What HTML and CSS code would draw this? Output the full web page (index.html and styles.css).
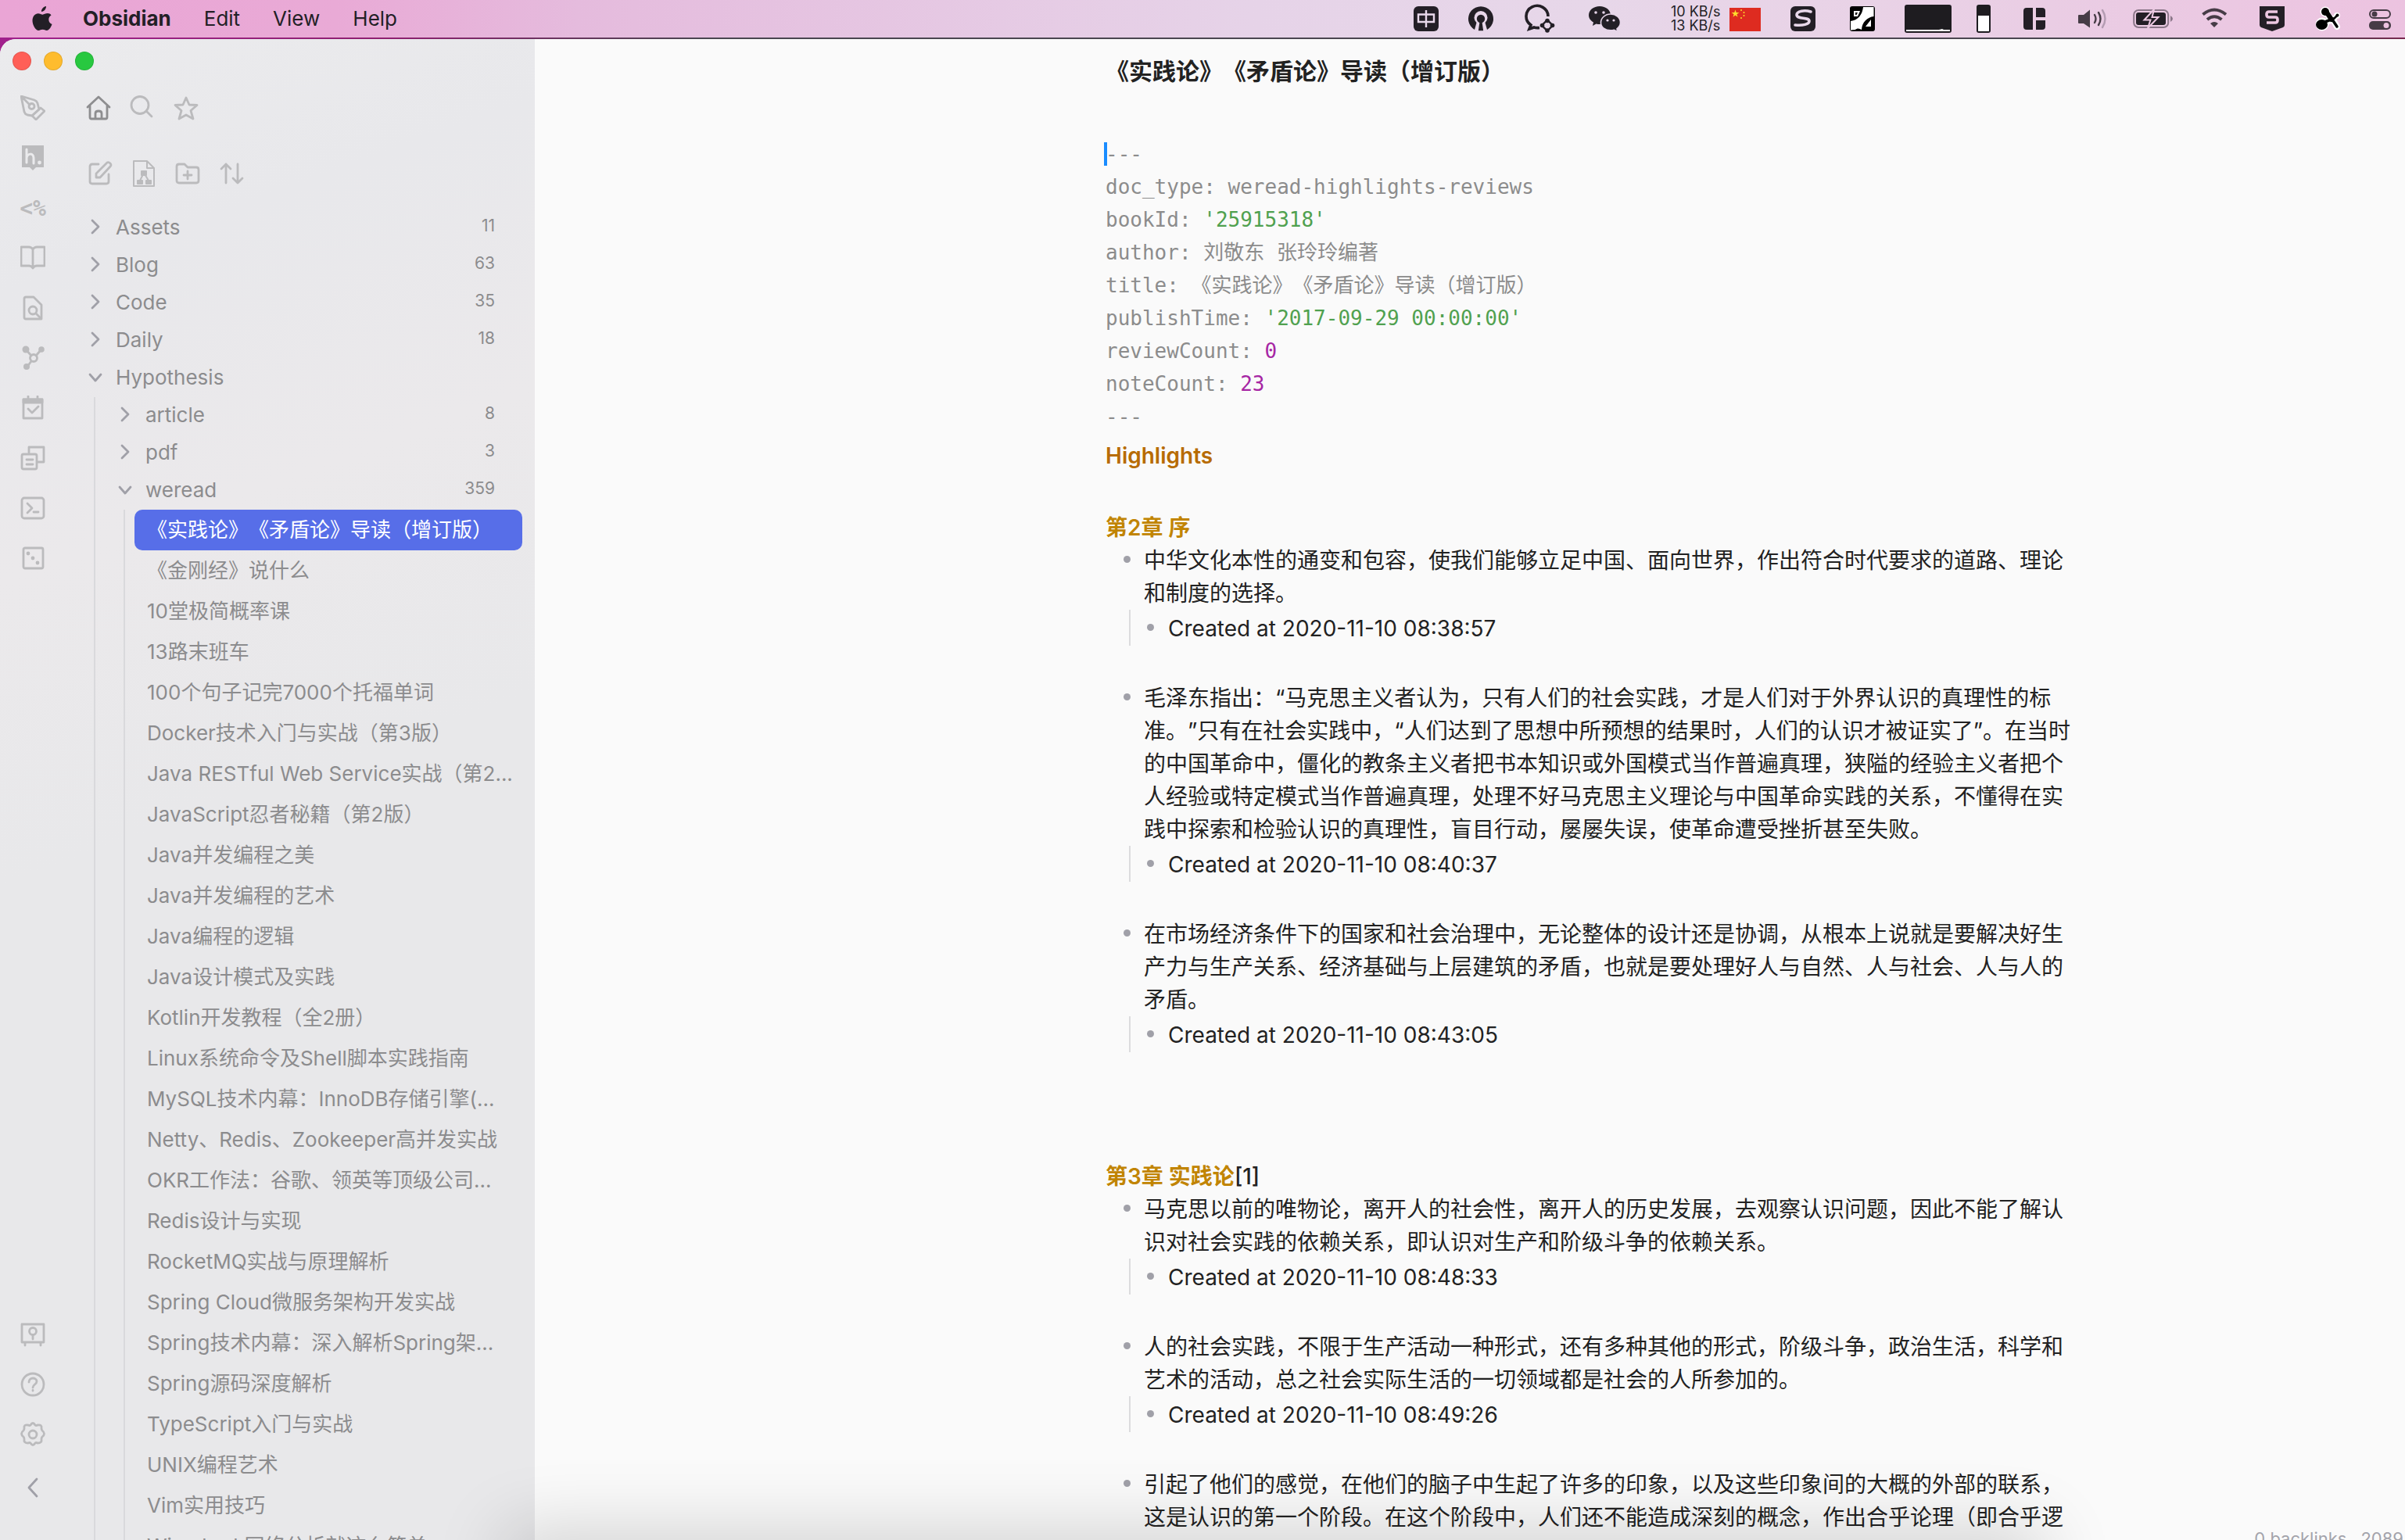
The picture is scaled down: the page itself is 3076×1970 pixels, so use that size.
FILE: index.html
```html
<!DOCTYPE html>
<html lang="zh-CN">
<head>
<meta charset="utf-8">
<title>Obsidian</title>
<link rel="stylesheet" href="styles.css">
</head>
<body>
<header class="menubar">
  <nav class="menus" aria-label="Application menu">
    <svg class="apple" width="28" height="36" viewBox="0 0 28 36" fill="currentColor"><path d="M19 2c.3 3-2.600 7-6 7-.4-3 2.700-6.700 6-7zM25.500 13.500c-2 1.200-3.200 3-3.200 5.500 0 3 1.700 5 4.200 6-1 3.200-3.700 8-6.800 8-2 0-2.800-1.200-5.200-1.200s-3.200 1.200-5.200 1.200C5.500 33 1.500 26 1.500 20.500c0-5.700 3.400-9.300 7.300-9.300 2.400 0 4.200 1.500 5.800 1.500 1.500 0 3.500-1.600 6.400-1.600 1.600 0 3.500.8 4.500 2.400z"/></svg>
    <button class="menu menu-app">Obsidian</button>
    <button class="menu">Edit</button>
    <button class="menu">View</button>
    <button class="menu">Help</button>
  </nav>
  <div class="tray">
    <svg width="38" height="48" viewBox="0 0 38 48"><rect y="8" width="32" height="32" rx="6" fill="#231f26"/><path d="M6 18.500h20v9.500H6zM16 13v22" fill="none" stroke="#e8d8ea" stroke-width="2.400"/></svg>
    <svg width="40" height="48" viewBox="0 0 40 48"><path d="M8 38A16 16 0 1 1 24 38L21.500 29A8.500 8.500 0 1 0 10.500 29z" fill="#231f26"/><path d="M14 26h4l2 14h-8z" fill="#231f26" stroke="#e7d7e9" stroke-width="1.500"/><circle cx="16" cy="24" r="5.200" fill="#231f26"/></svg>
    <svg width="50" height="48" viewBox="0 0 50 48"><path d="M30 21A14 13.500 0 1 0 8 32l-2 5 6-2q3 1 7 .5" fill="none" stroke="#231f26" stroke-width="3.600"/><path d="M29 25.500l7 7-7 7-7-7z" fill="none" stroke="#231f26" stroke-width="2.400"/><g fill="#231f26"><circle cx="29" cy="26.500" r="2.800"/><circle cx="35.500" cy="32.500" r="2.800"/><circle cx="29" cy="39" r="2.800"/><circle cx="22.500" cy="32.500" r="2.800"/></g></svg>
    <svg width="73" height="48" viewBox="0 0 73 48"><path d="M14 8c8 0 14 5 14 11.500S22 31 14 31c-1.500 0-3-.2-4.500-.6L5 33l1-4.500C2.500 26.500 0 23.500 0 19.500 0 13 6 8 14 8z" fill="#231f26"/><path d="M28 18c7 0 12.500 4.800 12.500 10.800 0 3.400-1.800 6-4.500 8l.8 3.700-4.300-2.200c-1.500.4-3 .6-4.500.6-7 0-12.500-4.200-12.500-10S21 18 28 18z" fill="#231f26" stroke="#e6d5e8" stroke-width="1.600"/><g fill="#e6d5e8"><circle cx="9" cy="16" r="1.800"/><circle cx="19" cy="16" r="1.800"/><circle cx="24" cy="26" r="1.600"/><circle cx="32" cy="26" r="1.600"/></g></svg>
    <div class="network">
      <div class="speeds"><span>10 KB/s</span><span>13 KB/s</span></div>
      <svg width="40" height="48" viewBox="0 0 40 48"><rect y="10" width="40" height="30" fill="#de2b20"/><path d="M7.500 12.500l1.200 3.500h3.700l-3 2.200 1.100 3.600-3-2.200-3 2.200 1.100-3.600-3-2.200h3.700z" fill="#fddc2c"/><g fill="#fddc2c"><circle cx="15" cy="13" r="1"/><circle cx="18.500" cy="16" r="1"/><circle cx="18.500" cy="20" r="1"/><circle cx="15" cy="23" r="1"/></g></svg>
    </div>
    <svg width="43" height="48" viewBox="0 0 43 48"><rect y="8" width="32" height="32" rx="6" fill="#231f26"/><path d="M26 15c-8-2.500-18-1-18 4 0 6 16 2.500 16 8 0 4-8 6-18 5" fill="none" stroke="#e8d8ea" stroke-width="3.600" stroke-linecap="round"/></svg>
    <svg width="39" height="48" viewBox="0 0 39 48"><rect x="1" y="8" width="32" height="32" rx="3" fill="#000"/><path d="M18 9h13.500v12c-8 1-15 7-15.500 17-3-2-6-2-8 0L2 38.500V27c9-1 15-8 16-18z" fill="#fff"/><path d="M6 14h8l-3 7H6zM28 25v9h-7z" fill="#fff"/><path d="M8 16h3l-1.500 3H8z" fill="#000"/></svg>
    <svg width="60" height="48" viewBox="0 0 60 48"><rect y="6" width="60" height="36" rx="3" fill="#1e1c20"/><path d="M2 40v-2h42l4-1 2 1h8v2z" fill="#fff"/></svg>
    <svg width="28" height="48" viewBox="0 0 28 48"><rect y="6" width="18" height="36" rx="3" fill="#1e1c20"/><rect x="2" y="20" width="14" height="20" fill="#fff"/></svg>
    <svg width="38" height="48" viewBox="0 0 38 48" fill="#231f26"><path d="M4 10h8v28H4a4 4 0 0 1-4-4V14a4 4 0 0 1 4-4zM16 10h8a4 4 0 0 1 4 4v8H16zM16 26h12v8a4 4 0 0 1-4 4h-8z"/></svg>
    <svg width="38" height="48" viewBox="0 0 38 48"><path d="M1 19h6l8-6.500v23L7 30H1a1 1 0 0 1-1-1v-9a1 1 0 0 1 1-1z" fill="#463c46"/><g fill="none" stroke-width="2.400" stroke-linecap="round"><path d="M21 19q3 5 0 10" stroke="#463c46"/><path d="M26 16q5 8 0 16" stroke="#463c46"/><path d="M31 13q7 11 0 22" stroke="#b49cb2"/></g></svg>
    <svg width="56" height="48" viewBox="0 0 56 48"><rect x="1.200" y="13" width="44" height="22" rx="6" fill="none" stroke="#8a7688" stroke-width="2"/><rect x="4" y="16" width="38" height="16" rx="3" fill="#231f26"/><path d="M48 20q6 4 0 8z" fill="#8a7688"/><path d="M27 12L14.500 25.500h8L19 36l13.500-14h-8z" fill="#231f26" stroke="#ecc9e2" stroke-width="2"/></svg>
    <svg width="42" height="48" viewBox="0 0 42 48"><g fill="none" stroke="#463c46" stroke-width="4"><path d="M1.500 18.500q14.500-12 29.500 0"/><path d="M7 25q9-7.500 18.500 0"/></g><path d="M11 30q5-4 10 0l-5 5z" fill="#463c46"/></svg>
    <svg width="39" height="48" viewBox="0 0 39 48"><path d="M0 8h32v24q0 2-2 3l-14 5-14-5q-2-1-2-3z" fill="#231f26"/><path d="M23 15H12q-3 0-3 3v1q0 3 3 3h8q3 0 3 3v1q0 3-3 3H9" fill="none" stroke="#ecc7e1" stroke-width="3.600"/></svg>
    <svg width="37" height="48" viewBox="0 0 37 48"><g stroke="#fff" stroke-width="4" fill="#fff"><circle cx="13" cy="15" r="4.500"/><circle cx="9" cy="31" r="6.500"/><path d="M13 14l8 12M10 30l14-6M22 24l6 10" stroke-width="8" stroke-linecap="round"/><circle cx="28" cy="20" r="2"/></g><g fill="#000" stroke="#000" stroke-linecap="round"><ellipse cx="13" cy="15" rx="5" ry="5" stroke="none"/><ellipse cx="8.500" cy="31.500" rx="7.500" ry="6.500" stroke="none"/><path d="M15 16l6 9" stroke-width="6"/><path d="M10 29l13-5M22 25l6 9" stroke-width="3.500"/><path d="M24 24l4-4" stroke-width="2.500"/><circle cx="28.500" cy="19.500" r="2" stroke="none"/></g></svg>
    <svg width="28" height="48" viewBox="0 0 28 48"><rect x="1" y="13" width="26" height="10" rx="5" fill="none" stroke="#463c46" stroke-width="2"/><circle cx="7" cy="18" r="3.500" fill="#463c46"/><rect y="27" width="28" height="11" rx="5" fill="#463c46"/><circle cx="22" cy="32.500" r="3.500" fill="#ecc3e0"/></svg>
  </div>
</header>

<div class="window">
  <aside class="side">
    <div class="lights">
      <button class="light red" aria-label="Close"></button>
      <button class="light yellow" aria-label="Minimise"></button>
      <button class="light green" aria-label="Zoom"></button>
    </div>
    <div class="side-body">
      <nav class="ribbon" aria-label="Ribbon">
        <button aria-label="Pen"><svg class="icon" viewBox="0 0 32 32"><path d="M1 1l17 5q3 1 4 4l2 8-9 8-6-1q-3-1-4-4zM1 1l11 11"/><circle cx="14.500" cy="14" r="3.500"/><path d="M26 16l5 4-11 11-5-5z"/></svg></button>
        <button aria-label="Hypothesis"><svg class="icon" viewBox="0 0 32 32"><path d="M2 0h28v28H20l-4 4-4-4H2z" fill="currentColor" stroke="none"/><path d="M8 5v17M8 16c1-6 9-7 9 0v7" stroke="#eaeaec" stroke-width="3"/><circle cx="24.500" cy="22" r="2.400" fill="#eaeaec" stroke="none"/></svg></button>
        <button class="tpl" aria-label="Templates">&lt;%</button>
        <button aria-label="Reader"><svg class="icon" viewBox="0 0 32 32"><path d="M16 5q-2-3-5-3H1v24h10q3 0 5 3 2-3 5-3h10V2H21q-3 0-5 3zM16 5v24"/></svg></button>
        <button aria-label="Quick search"><svg class="icon" viewBox="0 0 32 32"><path d="M7 2h10l10 10v18H7q-2 0-2-2V4q0-2 2-2z"/><circle cx="16" cy="19" r="5"/><path d="M20 23l6 6"/></svg></button>
        <button aria-label="Graph view"><svg class="icon" viewBox="0 0 32 32"><circle cx="17" cy="16" r="4.500"/><path d="M7 5l7 8M20 13l6-7M14 20l-5 7"/><g fill="currentColor" stroke="none"><circle cx="7" cy="5" r="4.500"/><circle cx="27" cy="5" r="3.800"/><circle cx="8" cy="27" r="4"/></g></svg></button>
        <button aria-label="Daily note"><svg class="icon" viewBox="0 0 32 32"><path d="M4 5h24v24H4zM10 1v4M22 1v4M10 17l5 5 8-8"/><path d="M4 5h24v4H4z" fill="currentColor"/></svg></button>
        <button aria-label="Cards"><svg class="icon" viewBox="0 0 32 32"><path d="M11 9V2h19v19h-8"/><rect x="2" y="11" width="19" height="19" rx="2"/><path d="M8 18h8M8 24h8"/></svg></button>
        <button aria-label="Command palette"><svg class="icon" viewBox="0 0 32 32"><rect x="2" y="3" width="28" height="26" rx="3"/><path d="M9 10l6 6-6 6M17 21h6"/></svg></button>
        <button aria-label="Random note"><svg class="icon" viewBox="0 0 32 32"><rect x="4" y="3" width="25" height="26" rx="2"/><g fill="currentColor" stroke="none"><circle cx="10" cy="10" r="2.400"/><circle cx="16" cy="16" r="2.400"/><circle cx="22" cy="22" r="2.400"/></g></svg></button>
        <button class="push" aria-label="Open vault"><svg class="icon" viewBox="0 0 32 32"><path d="M2 3h28v23H2zM6 26v4M26 26v4M16 17v5"/><circle cx="16" cy="12" r="4.500"/></svg></button>
        <button aria-label="Help"><svg class="icon" viewBox="0 0 32 32"><circle cx="16" cy="16" r="14"/><path d="M11 13c0-7 10-6 10-1 0 4-5 4-5 8M16 23.500v.5"/></svg></button>
        <button aria-label="Settings"><svg class="icon" viewBox="0 0 32 32"><path d="M13 4q3-5 6 0 1 1 3 0 6-1 5 4 0 2 1 3 5 4 0 8-1 1-1 3 1 5-5 5-2-1-3 0-3 5-6 0-1-1-3 0-6 0-5-5 0-2-1-3-5-4 0-8 1-1 1-3-1-5 5-4 2 1 3 0z"/><circle cx="16" cy="16" r="5"/></svg></button>
        <button class="collapse" aria-label="Collapse sidebar"><svg class="icon" viewBox="0 0 32 32"><path d="M21 5L11 16l10 11"/></svg></button>
      </nav>
      <section class="explorer">
        <div class="tabs">
          <button class="active" aria-label="Files"><svg class="icon" viewBox="0 0 32 32"><path d="M2 15L16 2l14 13M5 13v15q0 2 2 2h18q2 0 2-2V13M12 30v-7q0-3 4-3t4 3v7"/></svg></button>
          <button aria-label="Search"><svg class="icon" viewBox="0 0 32 32"><circle cx="13" cy="12.500" r="11"/><path d="M21 20l7 7"/></svg></button>
          <button aria-label="Starred"><svg class="icon" viewBox="0 0 32 32"><path d="M16 3l4 9 10 .5-8 7L25 30l-9-5-9 5 3-10.500-8-7L12 12z"/></svg></button>
        </div>
        <div class="actions">
          <button aria-label="New note"><svg class="icon" viewBox="0 0 32 32"><path d="M14 4H6Q3 4 3 7v19q0 3 3 3h18q3 0 3-3V17M11 21v-5L25 2q2-1 4 1t0 4L16 21z"/></svg></button>
          <button aria-label="New diagram"><svg class="icon tall" viewBox="0 0 32 36"><path d="M3 2h17l9 9v23H3zM20 2v9h9M16 17l-5 10M16 17l6 10" stroke-width="2"/><g fill="currentColor" stroke="none"><rect x="12" y="14" width="8" height="7" rx="1"/><rect x="7" y="26" width="8" height="6" rx="1"/><rect x="18" y="26" width="8" height="6" rx="1"/></g></svg></button>
          <button aria-label="New folder"><svg class="icon" viewBox="0 0 32 32"><path d="M2 7q0-3 3-3h7l4 4h11q3 0 3 3v14q0 3-3 3H5q-3 0-3-3zM16 13v10M11 18h10"/></svg></button>
          <button aria-label="Sort order"><svg class="icon" viewBox="0 0 32 32"><path d="M9 28V4M3 10l6-6 6 6M24 4v24M18 22l6 6 6-6"/></svg></button>
        </div>
        <ul class="tree">
          <li><button class="folder"><svg class="chev" viewBox="0 0 20 20"><path d="M6 2l8 8-8 8"/></svg><span>Assets</span><span class="count">11</span></button></li>
          <li><button class="folder"><svg class="chev" viewBox="0 0 20 20"><path d="M6 2l8 8-8 8"/></svg><span>Blog</span><span class="count">63</span></button></li>
          <li><button class="folder"><svg class="chev" viewBox="0 0 20 20"><path d="M6 2l8 8-8 8"/></svg><span>Code</span><span class="count">35</span></button></li>
          <li><button class="folder"><svg class="chev" viewBox="0 0 20 20"><path d="M6 2l8 8-8 8"/></svg><span>Daily</span><span class="count">18</span></button></li>
          <li><button class="folder"><svg class="chev" viewBox="0 0 20 20"><path d="M3 7l7 8 7-8"/></svg><span>Hypothesis</span></button>
            <ul>
              <li><button class="folder"><svg class="chev" viewBox="0 0 20 20"><path d="M6 2l8 8-8 8"/></svg><span>article</span><span class="count">8</span></button></li>
              <li><button class="folder"><svg class="chev" viewBox="0 0 20 20"><path d="M6 2l8 8-8 8"/></svg><span>pdf</span><span class="count">3</span></button></li>
              <li><button class="folder"><svg class="chev" viewBox="0 0 20 20"><path d="M3 7l7 8 7-8"/></svg><span>weread</span><span class="count">359</span></button>
                <ul>
                  <li><a class="file current" href="#">《实践论》《矛盾论》导读（增订版）</a></li>
                  <li><a class="file" href="#">《金刚经》说什么</a></li>
                  <li><a class="file" href="#">10堂极简概率课</a></li>
                  <li><a class="file" href="#">13路末班车</a></li>
                  <li><a class="file" href="#">100个句子记完7000个托福单词</a></li>
                  <li><a class="file" href="#">Docker技术入门与实战（第3版）</a></li>
                  <li><a class="file" href="#">Java RESTful Web Service实战（第2...</a></li>
                  <li><a class="file" href="#">JavaScript忍者秘籍（第2版）</a></li>
                  <li><a class="file" href="#">Java并发编程之美</a></li>
                  <li><a class="file" href="#">Java并发编程的艺术</a></li>
                  <li><a class="file" href="#">Java编程的逻辑</a></li>
                  <li><a class="file" href="#">Java设计模式及实践</a></li>
                  <li><a class="file" href="#">Kotlin开发教程（全2册）</a></li>
                  <li><a class="file" href="#">Linux系统命令及Shell脚本实践指南</a></li>
                  <li><a class="file" href="#">MySQL技术内幕：InnoDB存储引擎(...</a></li>
                  <li><a class="file" href="#">Netty、Redis、Zookeeper高并发实战</a></li>
                  <li><a class="file" href="#">OKR工作法：谷歌、领英等顶级公司...</a></li>
                  <li><a class="file" href="#">Redis设计与实现</a></li>
                  <li><a class="file" href="#">RocketMQ实战与原理解析</a></li>
                  <li><a class="file" href="#">Spring Cloud微服务架构开发实战</a></li>
                  <li><a class="file" href="#">Spring技术内幕：深入解析Spring架...</a></li>
                  <li><a class="file" href="#">Spring源码深度解析</a></li>
                  <li><a class="file" href="#">TypeScript入门与实战</a></li>
                  <li><a class="file" href="#">UNIX编程艺术</a></li>
                  <li><a class="file" href="#">Vim实用技巧</a></li>
                  <li><a class="file" href="#">Wireshark网络分析就这么简单</a></li>
                </ul>
              </li>
            </ul>
          </li>
        </ul>
      </section>
    </div>
  </aside>

  <main class="editor">
    <h1 class="note-title">《实践论》《矛盾论》导读（增订版）</h1>
    <div class="front">
      <div class="line">---<span class="caret"></span></div>
      <div class="line">doc_type: weread-highlights-reviews</div>
      <div class="line">bookId: <span class="str">'25915318'</span></div>
      <div class="line">author: 刘敬东 张玲玲编著</div>
      <div class="line">title: 《实践论》《矛盾论》导读（增订版）</div>
      <div class="line">publishTime: <span class="str">'2017-09-29 00:00:00'</span></div>
      <div class="line">reviewCount: <span class="num">0</span></div>
      <div class="line">noteCount: <span class="num">23</span></div>
      <div class="line">---</div>
    </div>
    <h2 class="section">Highlights</h2>

    <h3 class="chapter">第2章 序</h3>
    <ul class="notes">
      <li>中华文化本性的通变和包容，使我们能够立足中国、面向世界，作出符合时代要求的道路、理论<br>和制度的选择。
        <ul><li>Created at 2020-11-10 08:38:57</li></ul></li>
      <li>毛泽东指出：“马克思主义者认为，只有人们的社会实践，才是人们对于外界认识的真理性的标<br>准。”只有在社会实践中，“人们达到了思想中所预想的结果时，人们的认识才被证实了”。在当时<br>的中国革命中，僵化的教条主义者把书本知识或外国模式当作普遍真理，狭隘的经验主义者把个<br>人经验或特定模式当作普遍真理，处理不好马克思主义理论与中国革命实践的关系，不懂得在实<br>践中探索和检验认识的真理性，盲目行动，屡屡失误，使革命遭受挫折甚至失败。
        <ul><li>Created at 2020-11-10 08:40:37</li></ul></li>
      <li>在市场经济条件下的国家和社会治理中，无论整体的设计还是协调，从根本上说就是要解决好生<br>产力与生产关系、经济基础与上层建筑的矛盾，也就是要处理好人与自然、人与社会、人与人的<br>矛盾。
        <ul><li>Created at 2020-11-10 08:43:05</li></ul></li>
    </ul>

    <h3 class="chapter later">第3章 实践论<span class="ref">[1]</span></h3>
    <ul class="notes">
      <li>马克思以前的唯物论，离开人的社会性，离开人的历史发展，去观察认识问题，因此不能了解认<br>识对社会实践的依赖关系，即认识对生产和阶级斗争的依赖关系。
        <ul><li>Created at 2020-11-10 08:48:33</li></ul></li>
      <li>人的社会实践，不限于生产活动一种形式，还有多种其他的形式，阶级斗争，政治生活，科学和<br>艺术的活动，总之社会实际生活的一切领域都是社会的人所参加的。
        <ul><li>Created at 2020-11-10 08:49:26</li></ul></li>
      <li>引起了他们的感觉，在他们的脑子中生起了许多的印象，以及这些印象间的大概的外部的联系，<br>这是认识的第一个阶段。在这个阶段中，人们还不能造成深刻的概念，作出合乎论理（即合乎逻</li>
    </ul>
  </main>
  <footer class="status"><span>0 backlinks</span><span>2089 words</span></footer>
  <div class="dock-shade"></div>
</div>
</body>
</html>
```
FILE: styles.css
```css
* {
  box-sizing: border-box;
}

body {
  margin: 0;
  height: 100vh;
  overflow: hidden;
  display: flex;
  flex-direction: column;
  background: linear-gradient(90deg, #a0208c 0, #8e2070 500px, #4a4650 900px, #4a4650 96%, #7a2850 100%);
  font-family: Inter, "Noto Sans CJK SC", sans-serif;
  font-size: 26px;
  text-spacing-trim: space-all;
  text-autospace: no-autospace;
}

button {
  margin: 0;
  padding: 0;
  border: 0;
  background: none;
  color: inherit;
  font: inherit;
  text-align: left;
}

ul {
  margin: 0;
  padding: 0;
  list-style: none;
}

svg {
  display: block;
  flex: none;
}

/* System menu bar */
.menubar {
  flex: none;
  height: 48px;
  display: flex;
  justify-content: space-between;
  padding: 0 18px 0 40px;
  background: linear-gradient(90deg, #eaa5d5 0, #e9aad6 14%, #e5bbdd 24%, #e6d3e8 52%, #e7d7e9 66%, #e9d2e6 78%, #ecc3e0 100%);
  color: #231f26;
}

.menus,
.tray {
  display: flex;
  align-items: center;
}

.menus {
  gap: 42px;
}

.apple {
  margin-right: -4px;
}

.menu {
  font-size: 26px;
  line-height: 46px;
}

.menu-app {
  font-weight: 700;
}

.tray {
  gap: 32px;
}

.network {
  display: flex;
  gap: 8px;
  padding-right: 6px;
}

.speeds {
  display: flex;
  flex-direction: column;
  justify-content: center;
  width: 67px;
  font-size: 18px;
  line-height: 18px;
  white-space: nowrap;
}

/* Window */
.window {
  flex: 1;
  min-height: 0;
  margin-top: 2px;
  position: relative;
  display: grid;
  grid-template-columns: 684px 1fr;
  overflow: hidden;
  border-top-left-radius: 20px;
  background: #fafafa;
}

.side {
  min-height: 0;
  display: flex;
  flex-direction: column;
  background: linear-gradient(160deg, #ebebed 0, #e8e8eb 15%, #ebe9eb 32%, #e8e8ea 50%, #e8e8ea 100%);
  color: #8c8c8e;
}

.lights {
  flex: none;
  height: 56px;
  display: flex;
  align-items: center;
  gap: 16px;
  padding-left: 16px;
}

.light {
  width: 24px;
  height: 24px;
  border-radius: 50%;
  border: 1px solid #0000001a;
}

.red { background: #ff5f57; }
.yellow { background: #febc2e; }
.green { background: #28c840; }

.side-body {
  flex: 1;
  min-height: 0;
  display: grid;
  grid-template-columns: 84px 1fr;
}

.ribbon {
  min-height: 0;
  display: flex;
  flex-direction: column;
  padding-bottom: 31px;
  color: #bbbbbd;
}

.ribbon button {
  height: 64px;
  display: flex;
  align-items: center;
  justify-content: center;
}

.ribbon .push {
  margin-top: auto;
}

.ribbon .collapse {
  height: 72px;
  color: #a0a0a8;
}

.ribbon .tpl {
  font-family: "DejaVu Sans Mono", monospace;
  font-size: 28px;
  font-weight: 700;
}

.icon {
  width: 32px;
  height: 32px;
  fill: none;
  stroke: currentColor;
  stroke-width: 2.8;
  stroke-linejoin: round;
  stroke-linecap: round;
}

.icon.tall {
  height: 36px;
}

.explorer {
  min-width: 0;
  min-height: 0;
  overflow: hidden;
}

.tabs,
.actions {
  display: flex;
  height: 64px;
  color: #bbbbbd;
}

.tabs {
  padding-left: 14px;
}

.actions {
  margin-top: 20px;
  padding-left: 16px;
}

.tabs button,
.actions button {
  width: 56px;
  display: flex;
  align-items: center;
  justify-content: center;
}

.tabs .active {
  color: #8e8e90;
}

/* File tree */
.tree {
  margin-top: 14px;
}

.tree ul {
  margin-left: 36px;
  border-left: 2px solid #d9d9dc;
}

.folder {
  width: 100%;
  height: 48px;
  display: flex;
  align-items: center;
  padding: 0 51px 4px 28px;
}

.chev {
  width: 20px;
  height: 20px;
  margin-right: 16px;
  fill: none;
  stroke: #a0a0a8;
  stroke-width: 2.8;
  stroke-linecap: round;
  stroke-linejoin: round;
}

.count {
  margin-left: auto;
  padding-bottom: 4px;
  font-size: 21px;
}

.file {
  display: block;
  height: 52px;
  margin: 0 16px 0 12px;
  padding-left: 16px;
  border-radius: 10px;
  color: inherit;
  line-height: 52px;
  text-decoration: none;
  white-space: nowrap;
}

.current {
  background: #576ee8;
  color: #fff;
}

/* Note */
.editor {
  min-width: 0;
  min-height: 0;
  overflow: hidden;
  padding: 20px 0 0 730px;
  color: #222;
  font-size: 28px;
  line-height: 42px;
  white-space: nowrap;
}

.note-title {
  margin: 0 0 64px;
  font-size: 30px;
  font-weight: 700;
  line-height: 42px;
}

.front {
  color: #8c8c8c;
  font-family: "DejaVu Sans Mono", "Noto Sans CJK SC", monospace;
  font-size: 26px;
}

.line {
  position: relative;
  height: 42px;
}

.caret {
  position: absolute;
  left: -2px;
  top: 6px;
  width: 4px;
  height: 30px;
  background: #1a8cff;
}

.str { color: #50a14f; }
.num { color: #a626a4; }

.section,
.chapter {
  margin: 0;
  font-size: 28px;
  font-weight: 600;
}

.section {
  margin: 8px 0 50px;
  color: #b76b01;
}

.chapter {
  color: #c18401;
}

.later {
  margin-top: 138px;
}

.ref {
  color: #222;
  font-weight: 500;
}

.notes li {
  position: relative;
}

.notes > li {
  padding-left: 49px;
}

.notes > li + li {
  margin-top: 46px;
}

.notes li::before {
  content: "";
  position: absolute;
  left: 23px;
  top: 15px;
  width: 9px;
  height: 9px;
  border-radius: 50%;
  background: #a0a0a8;
}

.notes ul {
  margin-left: -19px;
  padding: 2px 0 0 48px;
  border-left: 2px solid #dcdcde;
  line-height: 44px;
}

.notes ul li::before {
  left: -27px;
  top: 16px;
}

/* Overlays at the bottom edge */
.status {
  position: absolute;
  right: -68px;
  bottom: -12px;
  display: flex;
  gap: 18px;
  color: #a3a3ab;
  font-size: 22px;
  line-height: 28px;
}

.dock-shade {
  position: absolute;
  left: 22%;
  right: 16%;
  bottom: -40px;
  height: 20px;
  box-shadow: 0 0 90px 30px #0000002e;
  pointer-events: none;
}
```
